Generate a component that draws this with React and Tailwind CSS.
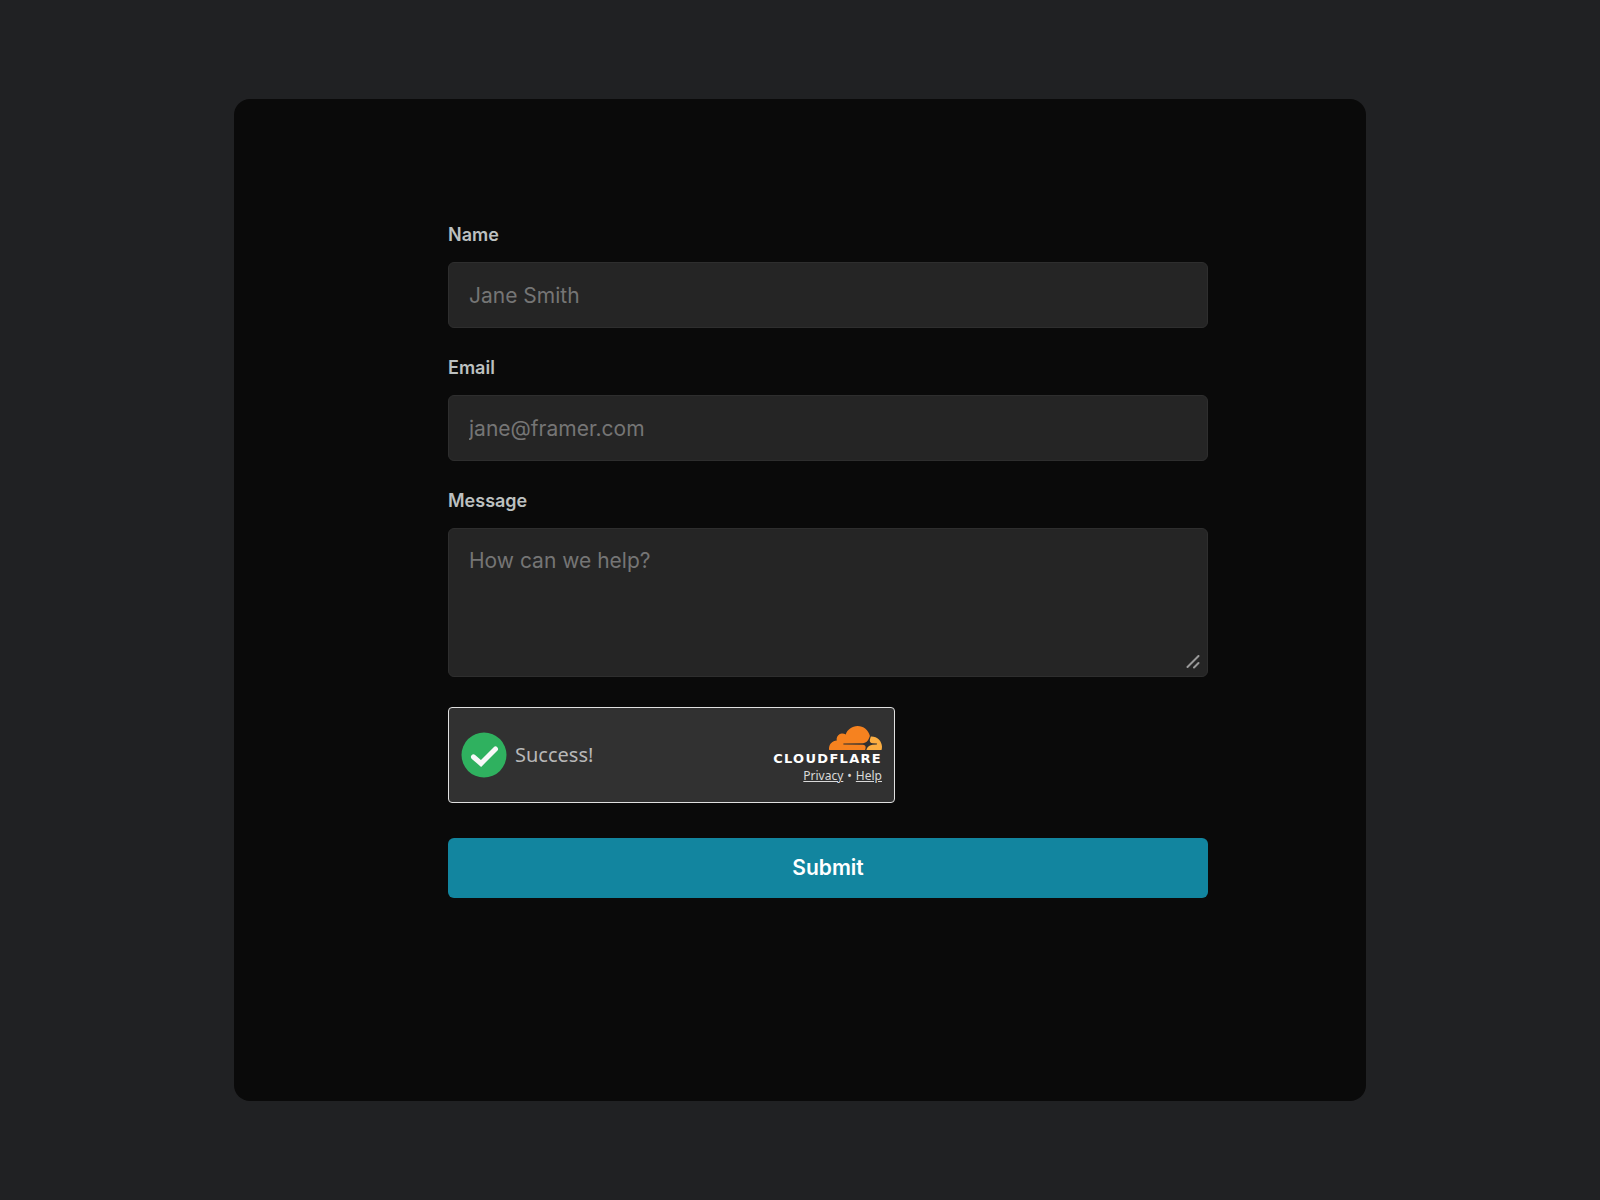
const inputClass =
  'block w-full rounded-md border border-[#2e2e2e] bg-[#252525] px-5 font-[inherit] text-[21px] text-gray-200 placeholder:text-[#757575] placeholder:opacity-100 outline-none focus:border-[#12859f]';

function Field({ id, label, children }) {
  return (
    <div>
      <label htmlFor={id} className="mb-[15px] block text-lg leading-6 font-semibold text-[#bcc0c0]">
        {label}
      </label>
      {children}
    </div>
  );
}

function CloudLogo() {
  return (
    <svg viewBox="0 6.57 24 10.86" className="h-6 w-[53px]" aria-hidden="true">
      <path
        fill="#f6821f"
        d="M16.5088 16.8447c.1475-.5068.0908-.9707-.1553-1.3154-.2246-.3164-.6045-.499-1.0615-.5205l-8.6592-.1123a.1559.1559 0 0 1-.1333-.0713c-.0283-.042-.0351-.0986-.021-.1553.0278-.084.1123-.1484.2036-.1562l8.7359-.1123c1.0351-.0489 2.1601-.8868 2.5537-1.9136l.499-1.3013c.0215-.0561.0293-.1128.0147-.168-.5625-2.5463-2.835-4.4453-5.5499-4.4453-2.5039 0-4.6284 1.6177-5.3876 3.8614-.4927-.3658-1.1187-.5625-1.794-.499-1.2026.119-2.1665 1.083-2.2861 2.2856-.0283.31-.0069.6128.0635.894C1.5683 13.171 0 14.7754 0 16.752c0 .1748.0142.3515.0352.5273.0141.083.0844.1475.1689.1475h15.9814c.0909 0 .1758-.0645.2032-.1553l.12-.4268z"
      />
      <path
        fill="#fbad41"
        d="M19.2656 11.2813c-.0771 0-.1611 0-.2383.0112-.0566 0-.1054.0415-.127.0976l-.3378 1.1744c-.1475.5068-.0918.9707.1543 1.3164.2256.3164.6055.498 1.0625.5195l1.8437.1133c.0557 0 .1055.0263.1329.0703.0283.043.0351.1074.0214.1562-.0283.084-.1132.1485-.204.1553l-1.921.1123c-1.041.0488-2.1582.8867-2.5527 1.914l-.1406.3585c-.0283.0713.0215.1416.0986.1416h6.5977c.0771 0 .1474-.0489.169-.126.1122-.4082.1757-.837.1757-1.2803 0-2.6025-2.125-4.727-4.7344-4.727"
      />
    </svg>
  );
}

function Turnstile() {
  return (
    <div className="flex h-24 w-full max-w-[447px] items-center justify-between rounded-sm border border-[#e0e0e0] bg-[#313131] px-3 font-['Noto_Sans',sans-serif]">
      <div className="flex items-center gap-2">
        <svg viewBox="0 0 46 46" className="size-[46px]" aria-hidden="true">
          <circle cx="23" cy="23" r="22.5" fill="#2fb15f" />
          <path
            d="M12.5 25 20 31.5 34.5 17"
            fill="none"
            stroke="#f8f8f8"
            strokeWidth="5"
            strokeLinecap="round"
          />
        </svg>
        <span className="text-xl leading-7 text-[#b8b8b8]">Success!</span>
      </div>
      <div className="flex flex-col items-end">
        <CloudLogo />
        <span className="mt-1 font-['DejaVu_Sans',sans-serif] text-[13px] leading-[10px] font-bold tracking-widest text-white">
          CLOUDFLARE
        </span>
        <div className="mt-1 flex items-center gap-1 text-xs leading-4 text-[#d9d9d9]">
          <a href="#privacy" className="underline">Privacy</a>
          <span>•</span>
          <a href="#help" className="underline">Help</a>
        </div>
      </div>
    </div>
  );
}

export default function App() {
  return (
    <div className="flex min-h-screen justify-center bg-[#202123] py-[99px] font-['Inter',sans-serif]">
      <main className="w-full max-w-[1132px] rounded-2xl bg-[#0a0a0a] pt-[124px] pr-[158px] pb-16 pl-[214px]">
        <form className="flex flex-col" onSubmit={(e) => e.preventDefault()}>
          <div className="flex flex-col gap-7">
            <Field id="name" label="Name">
              <input id="name" type="text" placeholder="Jane Smith" className={`${inputClass} h-[66px]`} />
            </Field>
            <Field id="email" label="Email">
              <input id="email" type="email" placeholder="jane@framer.com" className={`${inputClass} h-[66px]`} />
            </Field>
            <Field id="message" label="Message">
              <div className="relative">
                <textarea
                  id="message"
                  placeholder="How can we help?"
                  className={`${inputClass} h-[149px] resize-none py-4`}
                />
                <svg
                  viewBox="0 0 14 14"
                  className="pointer-events-none absolute right-2 bottom-2 size-[14px]"
                  fill="none"
                  stroke="#999"
                  strokeWidth="2"
                  strokeLinecap="round"
                  aria-hidden="true"
                >
                  <path d="M1.5 12 12.5 1M8 12.5l4.5-4.5" />
                </svg>
              </div>
            </Field>
          </div>
          <div className="mt-[30px]">
            <Turnstile />
          </div>
          <button
            type="submit"
            className="mt-[35px] h-[60px] w-full cursor-pointer rounded-md bg-[#12859f] text-[21px] font-semibold text-white"
          >
            Submit
          </button>
        </form>
      </main>
    </div>
  );
}
